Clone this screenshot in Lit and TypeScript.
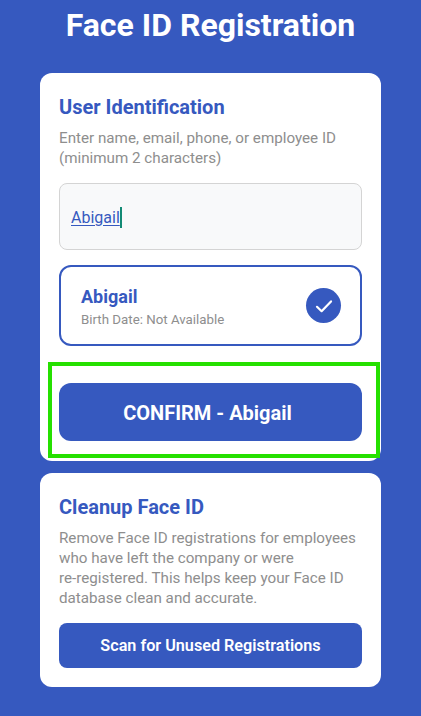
import { LitElement, html, css } from "lit";
import { customElement } from "lit/decorators.js";

@customElement("app-root")
export class AppRoot extends LitElement {
  static styles = css`
    :host {
      display: block;
      width: 421px;
      height: 716px;
      overflow: hidden;
      background: #3659bf;
      font-family: Roboto, "Liberation Sans", sans-serif;
      position: relative;
    }
    .page {
      display: flex;
      flex-direction: column;
      padding: 7px 40px 0;
    }
    h1 {
      margin: 0 0 30px;
      font-size: 32px;
      line-height: 36px;
      font-weight: 700;
      color: #fff;
      text-align: center;
      white-space: nowrap;
    }
    .card {
      background: #fff;
      border-radius: 12px;
      padding: 22px 19px 20px;
      display: flex;
      flex-direction: column;
    }
    .card + .card {
      margin-top: 12px;
      padding-bottom: 19px;
    }
    h2 {
      margin: 0;
      font-size: 20px;
      line-height: 24px;
      font-weight: 700;
      color: #3659bf;
    }
    .desc {
      margin: 9px 0 0;
      font-size: 15.2px;
      line-height: 20px;
      color: #8e8e8e;
    }
    .input {
      margin-top: 15px;
      height: 67px;
      box-sizing: border-box;
      border: 1px solid #d4d4d4;
      border-radius: 8px;
      background: #f8f9fa;
      padding: 1px 11px 0;
      display: flex;
      align-items: center;
      font-size: 16px;
      color: #3659bf;
    }
    .typed {
      text-decoration: underline;
      text-underline-offset: 2px;
      text-decoration-thickness: 1px;
    }
    .caret {
      width: 2px;
      height: 21px;
      background: #128a74;
    }
    .selected {
      margin-top: 15px;
      height: 81px;
      box-sizing: border-box;
      border: 2px solid #3659bf;
      border-radius: 12px;
      background: #fff;
      padding: 0 19px 0 20px;
      display: flex;
      align-items: center;
      justify-content: space-between;
    }
    .name {
      font-size: 18px;
      line-height: 22px;
      font-weight: 700;
      color: #3659bf;
      margin-top: 3px;
    }
    .birth {
      margin-top: 3px;
      font-size: 13.3px;
      line-height: 18px;
      color: #8e8e8e;
    }
    .check {
      width: 35px;
      height: 35px;
      border-radius: 50%;
      background: #3659bf;
      display: flex;
      align-items: center;
      justify-content: center;
    }
    .check svg {
      width: 24px;
      height: 24px;
      display: block;
    }
    .btn {
      display: flex;
      align-items: center;
      justify-content: center;
      background: #3659bf;
      color: #fff;
      font-weight: 700;
      border-radius: 12px;
    }
    .confirm {
      margin-top: 37px;
      height: 58px;
      box-sizing: border-box;
      font-size: 20px;
      padding: 1px 6px 0 0;
    }
    .scan {
      margin-top: 15px;
      height: 45px;
      font-size: 16.2px;
      font-weight: 600;
      border-radius: 8px;
    }
    .highlight {
      position: absolute;
      left: 48px;
      top: 362px;
      width: 332px;
      height: 96px;
      box-sizing: border-box;
      border: 4px solid #25e000;
      pointer-events: none;
    }
  `;

  render() {
    return html`
      <div class="page">
        <h1>Face ID Registration</h1>
        <section class="card">
          <h2>User Identification</h2>
          <p class="desc">Enter name, email, phone, or employee ID<br />(minimum 2 characters)</p>
          <div class="input"><span class="typed">Abigail</span><span class="caret"></span></div>
          <div class="selected">
            <div>
              <div class="name">Abigail</div>
              <div class="birth">Birth Date: Not Available</div>
            </div>
            <div class="check">
              <svg viewBox="0 0 24 24" fill="none" stroke="#fff" stroke-width="2.2" stroke-linecap="round" stroke-linejoin="round">
                <path d="M5 12.8l4.6 4.4L19 7.4" />
              </svg>
            </div>
          </div>
          <div class="btn confirm">CONFIRM - Abigail</div>
        </section>
        <section class="card">
          <h2>Cleanup Face ID</h2>
          <p class="desc">Remove Face ID registrations for employees<br />who have left the company or were<br />re-registered. This helps keep your Face ID<br />database clean and accurate.</p>
          <div class="btn scan">Scan for Unused Registrations</div>
        </section>
      </div>
      <div class="highlight"></div>
    `;
  }
}
